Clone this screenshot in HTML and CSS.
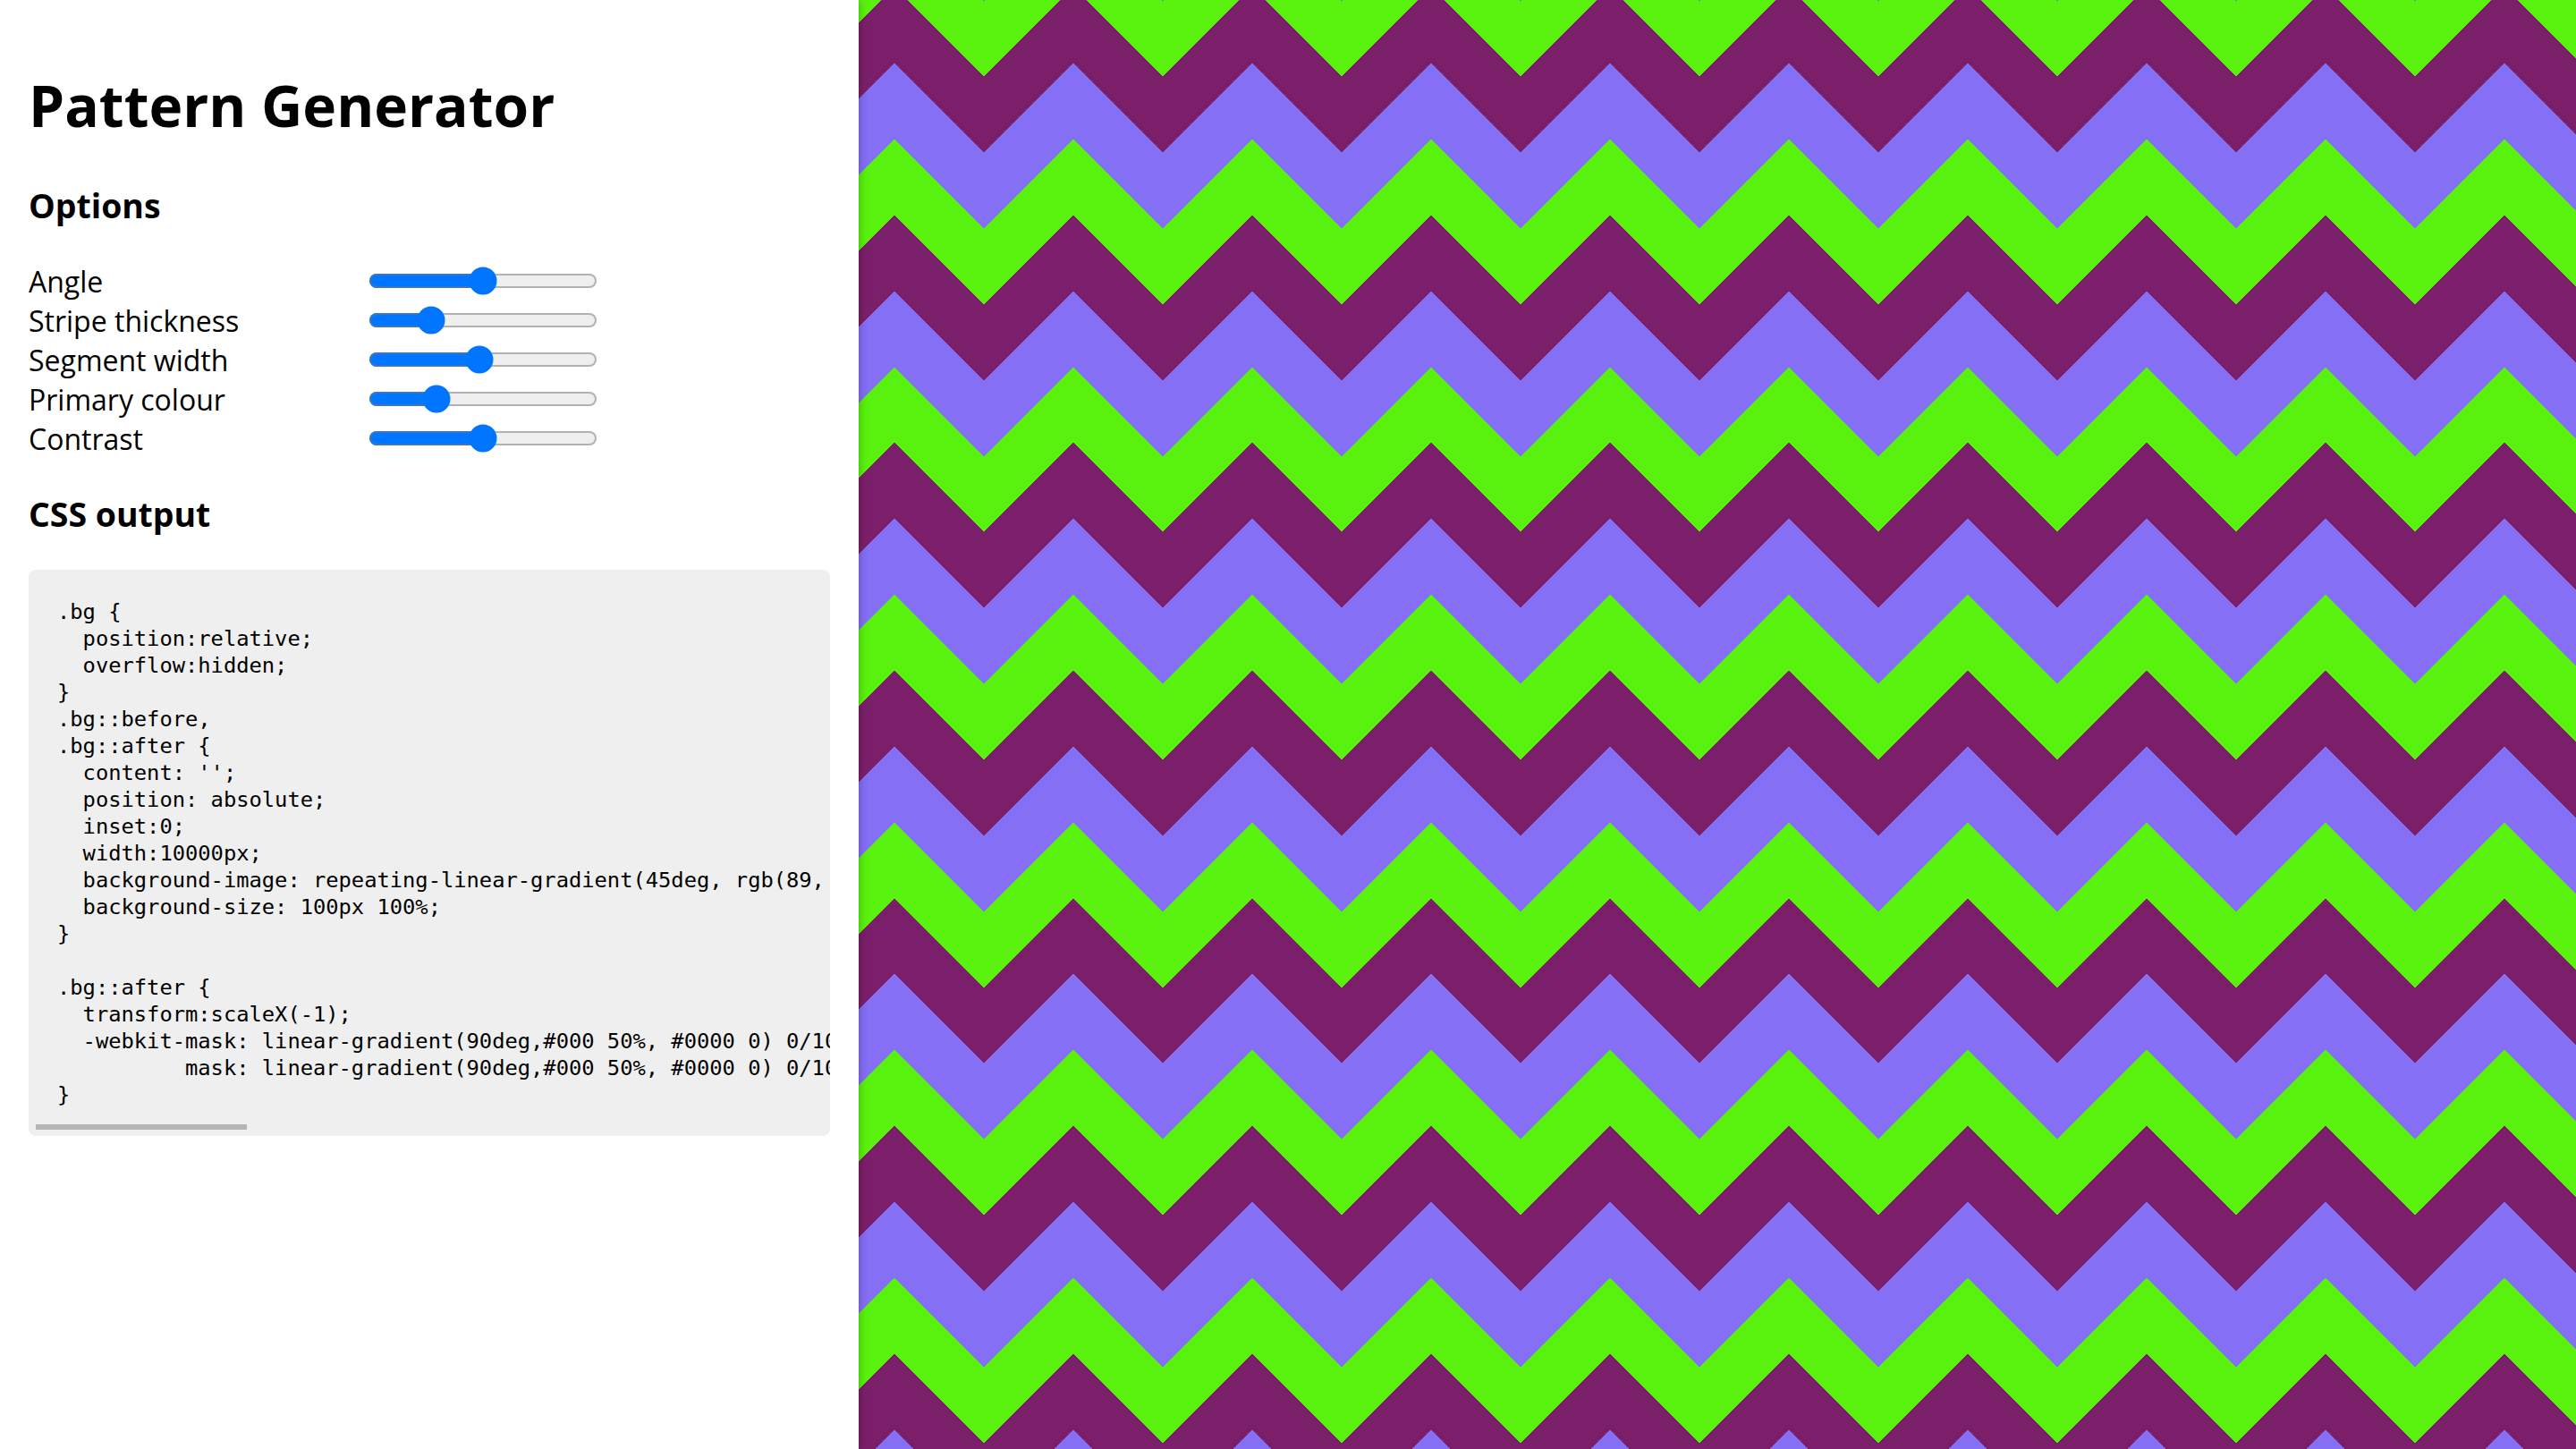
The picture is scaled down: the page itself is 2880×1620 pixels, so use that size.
FILE: index.html
```html
<!DOCTYPE html>
<html lang="en">
<head>
<meta charset="utf-8">
<title>Pattern Generator</title>
<link rel="stylesheet" href="styles.css">
</head>
<body>
<div class="bg">
  <aside class="panel">
    <h1 class="title">Pattern Generator</h1>
    <h2 class="section-title">Options</h2>
    <div class="options">
      <label class="option"><span class="option-label">Angle</span><input class="slider" type="range" min="0" max="100" value="50"></label>
      <label class="option"><span class="option-label">Stripe thickness</span><input class="slider" type="range" min="0" max="100" value="24"></label>
      <label class="option"><span class="option-label">Segment width</span><input class="slider" type="range" min="0" max="100" value="48"></label>
      <label class="option"><span class="option-label">Primary colour</span><input class="slider" type="range" min="0" max="100" value="27"></label>
      <label class="option"><span class="option-label">Contrast</span><input class="slider" type="range" min="0" max="100" value="50"></label>
    </div>
    <h2 class="section-title">CSS output</h2>
    <div class="code-box">
      <pre class="code"><code>.bg {
  position:relative;
  overflow:hidden;
}
.bg::before,
.bg::after {
  content: '';
  position: absolute;
  inset:0;
  width:10000px;
  background-image: repeating-linear-gradient(45deg, rgb(89, 242, 14) 0px, rgb(89, 242, 14) 30px, rgb(132, 111, 245) 30px, rgb(132, 111, 245) 60px, rgb(123, 31, 106) 60px, rgb(123, 31, 106) 90px, rgb(89, 242, 14) 90px);
  background-size: 100px 100%;
}

.bg::after {
  transform:scaleX(-1);
  -webkit-mask: linear-gradient(90deg,#000 50%, #0000 0) 0/100px;
          mask: linear-gradient(90deg,#000 50%, #0000 0) 0/100px;
}</code></pre>
      <div class="scrollbar" aria-hidden="true"><div class="scrollbar-thumb"></div></div>
    </div>
  </aside>
</div>
</body>
</html>
```

FILE: styles.css
```css
html,
body {
  margin: 0;
  height: 100%;
}

body {
  font-family: "Open Sans", "Noto Sans", sans-serif;
  font-size: 32px;
  color: #000;
  background: #fff;
}

.bg {
  position: relative;
  overflow: hidden;
  height: 100vh;
}

.bg::before,
.bg::after {
  content: '';
  position: absolute;
  inset: 0;
  width: 10000px;
  background-image: repeating-linear-gradient(45deg,
      rgb(132, 111, 245) 0 15.5px,
      rgb(123, 31, 106) 0 75.5px,
      rgb(89, 242, 14) 0 135.5px,
      rgb(132, 111, 245) 0 180px);
  background-size: 200px 100%;
}

.bg::after {
  transform: scaleX(-1);
  -webkit-mask: linear-gradient(90deg, #000 50%, #0000 0) 0/200px;
  mask: linear-gradient(90deg, #000 50%, #0000 0) 0/200px;
}

.panel {
  position: relative;
  z-index: 1;
  box-sizing: border-box;
  width: 960px;
  height: 100%;
  padding: 32px;
  background: #fff;
  box-shadow: 0 0 10px rgba(0, 0, 0, 0.3);
}

.title {
  margin: 42px 0 43px;
  font-size: 64px;
  font-weight: 700;
  line-height: normal;
}

.section-title {
  margin: 36.5px 0 37px;
  font-size: 37.44px;
  font-weight: 700;
  line-height: normal;
}

.option {
  display: flex;
  align-items: center;
  height: 44px;
}

.option-label {
  width: 376px;
}

.slider {
  zoom: 2;
  width: 128px;
  margin: 2px;
}

.code-box {
  background: #efefef;
  border-radius: 8px;
  overflow: hidden;
}

.code {
  margin: 0;
  padding: 32px 32px 11px;
  overflow-x: auto;
  scrollbar-width: none;
  font-family: "DejaVu Sans Mono", monospace;
  font-size: 23.75px;
  line-height: 30px;
}

.scrollbar {
  box-sizing: border-box;
  height: 20px;
  padding: 7px 8px;
}

.scrollbar-thumb {
  width: 236px;
  height: 6px;
  background: #b5b5b5;
}
```
